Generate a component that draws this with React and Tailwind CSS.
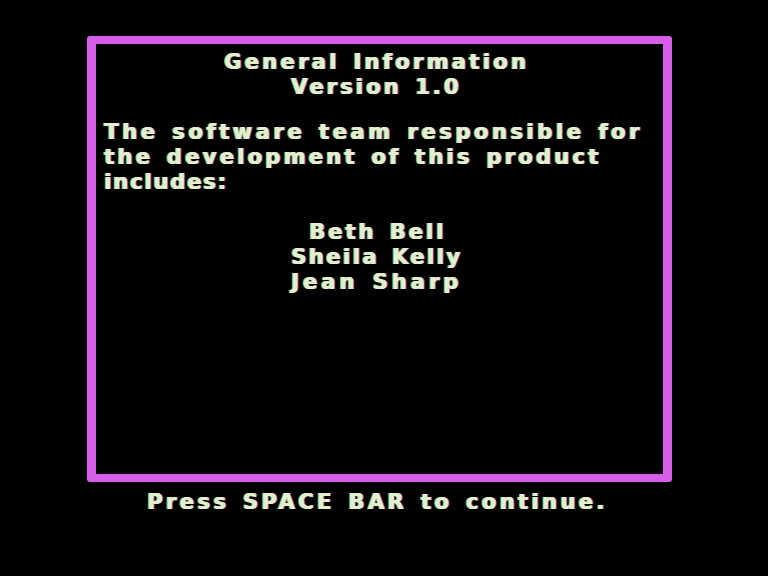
export default function App() {
  const line = "block whitespace-pre leading-[25px] h-[25px] [word-spacing:3px]";
  return (
    <div className="w-[768px] h-[576px] bg-black overflow-hidden font-['DejaVu_Sans',sans-serif] font-bold text-[21px] text-[#e2f0cc] [text-shadow:0.5px_0_#e2f0cc,-1px_0_#7fae55,1.5px_0_#8a5cc8]">
      <div className="ml-[87px] mt-[36px] w-[585px] h-[446px] border-x-[9px] border-y-[8px] border-[#d65ee8] rounded-[3px] pt-[6px]">
        <span className={`${line} pl-[128px] tracking-[3.31px]`}>General Information</span>
        <span className={`${line} pl-[195px] tracking-[3.1px]`}>Version 1.0</span>
        <div className="h-[20px]" />
        <span className={`${line} pl-[8px] tracking-[3.57px]`}>The software team responsible for</span>
        <span className={`${line} pl-[8px] tracking-[3.27px]`}>the development of this product</span>
        <span className={`${line} pl-[8px] tracking-[1.87px]`}>includes:</span>
        <div className="h-[25px]" />
        <span className={`${line} pl-[213px] tracking-[3px]`}>Beth Bell</span>
        <span className={`${line} pl-[195px] tracking-[2.49px]`}>Sheila Kelly</span>
        <span className={`${line} pl-[195px] tracking-[4px]`}>Jean Sharp</span>
      </div>
      <span className={`${line} mt-[8px] pl-[147px] tracking-[3.42px]`}>Press SPACE BAR to continue.</span>
    </div>
  );
}
